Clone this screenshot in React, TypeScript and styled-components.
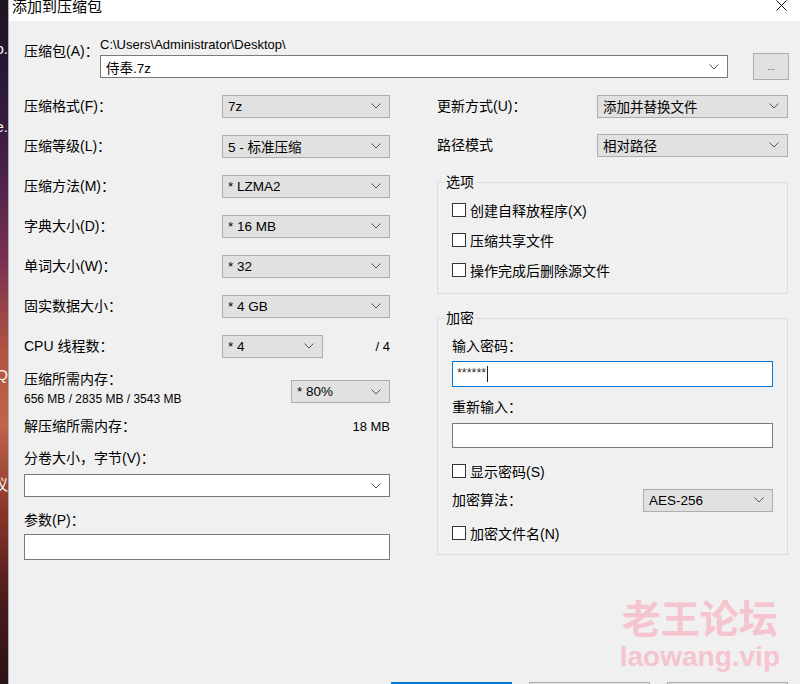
import styled, { createGlobalStyle } from "styled-components";

const GlobalStyle = createGlobalStyle`
  html, body {
    margin: 0;
    padding: 0;
    height: 100%;
    overflow: hidden;
    background: #f0f0f0;
  }
  body {
    font-family: "Liberation Sans", "Noto Sans CJK SC", sans-serif;
    color: #000;
  }
  * {
    box-sizing: border-box;
  }
`;

const Chevron = () => (
  <svg width="10" height="6" viewBox="0 0 10 6">
    <path d="M0.5 0.5 L5 5 L9.5 0.5" fill="none" stroke="#555" strokeWidth="1" />
  </svg>
);

const CloseIcon = () => (
  <svg width="11" height="11" viewBox="0 0 11 11">
    <path d="M0.5 0.5 L10.5 10.5 M10.5 0.5 L0.5 10.5" stroke="#111" strokeWidth="1" />
  </svg>
);

function Select({ value, width, white }: { value: string; width?: number; white?: boolean }) {
  return (
    <SelectBox $width={width} $white={white}>
      <span>{value}</span>
      <Chevron />
    </SelectBox>
  );
}

function Check({ label }: { label: string }) {
  return (
    <CheckRow>
      <Box />
      <span>{label}</span>
    </CheckRow>
  );
}

function App() {
  return (
    <Screen>
      <GlobalStyle />
      <Desktop>
        <DesktopText $top={40}>o.</DesktopText>
        <DesktopText $top={118}>e.</DesktopText>
        <DesktopText $top={366}>Q</DesktopText>
        <DesktopText $top={476}>议</DesktopText>
      </Desktop>
      <Dialog>
        <TitleBar>
          <Title>添加到压缩包</Title>
          <CloseIcon />
        </TitleBar>
        <Body>
          <ArchiveRow>
            <ArchiveLabel>压缩包(A)：</ArchiveLabel>
            <ArchiveMain>
              <PathText>C:\Users\Administrator\Desktop\</PathText>
              <ComboRow>
                <Select value="侍奉.7z" white />
                <BrowseButton>...</BrowseButton>
              </ComboRow>
            </ArchiveMain>
          </ArchiveRow>

          <Columns>
            <Column>
              <FieldRow $cols="198px 168px">
                <Label>压缩格式(F)：</Label>
                <Select value="7z" />
              </FieldRow>
              <FieldRow $cols="198px 168px">
                <Label>压缩等级(L)：</Label>
                <Select value="5 - 标准压缩" />
              </FieldRow>
              <FieldRow $cols="198px 168px">
                <Label>压缩方法(M)：</Label>
                <Select value="* LZMA2" />
              </FieldRow>
              <FieldRow $cols="198px 168px">
                <Label>字典大小(D)：</Label>
                <Select value="* 16 MB" />
              </FieldRow>
              <FieldRow $cols="198px 168px">
                <Label>单词大小(W)：</Label>
                <Select value="* 32" />
              </FieldRow>
              <FieldRow $cols="198px 168px">
                <Label>固实数据大小：</Label>
                <Select value="* 4 GB" />
              </FieldRow>
              <FieldRow $cols="198px 101px 1fr">
                <Label>CPU 线程数：</Label>
                <Select value="* 4" />
                <Value>/ 4</Value>
              </FieldRow>
              <MemBlock>
                <div>
                  <Label>压缩所需内存：</Label>
                  <MemSub>656 MB / 2835 MB / 3543 MB</MemSub>
                </div>
                <MemSelect>
                  <Select value="* 80%" width={99} />
                </MemSelect>
              </MemBlock>
              <SplitRow>
                <Label>解压缩所需内存：</Label>
                <Value>18 MB</Value>
              </SplitRow>
              <BlockLabel $top={14}>分卷大小，字节(V)：</BlockLabel>
              <VolumeCombo>
                <Select value="" white />
              </VolumeCombo>
              <BlockLabel $top={14}>参数(P)：</BlockLabel>
              <TextInput $top={5} $height={26} />
            </Column>

            <Column>
              <FieldRow $cols="160px 191px">
                <Label>更新方式(U)：</Label>
                <Select value="添加并替换文件" />
              </FieldRow>
              <FieldRow $cols="160px 191px" $height={38}>
                <Label>路径模式</Label>
                <Select value="相对路径" />
              </FieldRow>
              <Group $top={9}>
                <Legend>选项</Legend>
                <GroupInner $pad={4} $bottom={8}>
                  <Check label="创建自释放程序(X)" />
                  <Check label="压缩共享文件" />
                  <Check label="操作完成后删除源文件" />
                </GroupInner>
              </Group>
              <Group $top={15}>
                <Legend>加密</Legend>
                <GroupInner $pad={0} $bottom={6}>
                  <BlockLabel $top={10}>输入密码：</BlockLabel>
                  <TextInput $top={6} $height={26} $focused>
                    <Stars>******</Stars>
                    <Caret />
                  </TextInput>
                  <BlockLabel $top={11}>重新输入：</BlockLabel>
                  <TextInput $top={7} $height={25} />
                  <CheckSpacer>
                    <Check label="显示密码(S)" />
                  </CheckSpacer>
                  <AlgoRow>
                    <Label>加密算法：</Label>
                    <Select value="AES-256" width={130} />
                  </AlgoRow>
                  <Check label="加密文件名(N)" />
                </GroupInner>
              </Group>
            </Column>
          </Columns>

          <Footer>
            <DialogButton $primary>确定</DialogButton>
            <DialogButton>取消</DialogButton>
            <DialogButton>帮助</DialogButton>
          </Footer>
        </Body>

        <Watermark>
          <WatermarkCn>老王论坛</WatermarkCn>
          <WatermarkEn>laowang.vip</WatermarkEn>
        </Watermark>
      </Dialog>
    </Screen>
  );
}

const Screen = styled.div`
  display: flex;
  width: 800px;
  height: 684px;
  overflow: hidden;
`;

const Desktop = styled.div`
  position: relative;
  flex: none;
  width: 8px;
  overflow: hidden;
  background: linear-gradient(
    180deg,
    #1c1420 0%,
    #2a1838 12%,
    #4a2048 25%,
    #7a3050 38%,
    #b4553f 52%,
    #c0644a 62%,
    #8a3428 75%,
    #4a1a1a 88%,
    #2c1214 100%
  );
`;

const DesktopText = styled.span<{ $top: number }>`
  position: absolute;
  right: 0;
  top: ${(p) => p.$top}px;
  color: #f4f4f4;
  font-size: 15px;
  line-height: 18px;
  white-space: nowrap;
`;

const Dialog = styled.div`
  position: relative;
  flex: 1;
  display: flex;
  flex-direction: column;
  background: #f0f0f0;
  border-left: 1px solid #9fb4c8;
`;

const TitleBar = styled.div`
  height: 21px;
  flex: none;
  display: flex;
  justify-content: space-between;
  align-items: flex-start;
  padding: 0 13px 0 3px;
  background: #fff;
`;

const Title = styled.div`
  font-size: 15px;
  line-height: 14px;
  color: #000;
`;

const Body = styled.div`
  padding: 16px 11px 0 15px;
`;

const ArchiveRow = styled.div`
  display: flex;
`;

const ArchiveLabel = styled.div`
  width: 76px;
  flex: none;
  padding-top: 5px;
  font-size: 14px;
  line-height: 18px;
`;

const ArchiveMain = styled.div`
  flex: 1;
`;

const PathText = styled.div`
  font-size: 13px;
  line-height: 16px;
`;

const ComboRow = styled.div`
  display: flex;
  align-items: center;
  gap: 25px;
  height: 27px;

  & > div:first-child {
    flex: 1;
  }
`;

const BrowseButton = styled.div`
  width: 36px;
  height: 27px;
  flex: none;
  display: flex;
  align-items: center;
  justify-content: center;
  background: #e1e1e1;
  border: 1px solid #adadad;
  font-size: 9px;
  color: #444;
`;

const SelectBox = styled.div<{ $width?: number; $white?: boolean }>`
  width: ${(p) => (p.$width ? `${p.$width}px` : "100%")};
  height: 23px;
  display: flex;
  align-items: center;
  justify-content: space-between;
  padding: 0 8px 0 5px;
  background: ${(p) => (p.$white ? "#fff" : "#e1e1e1")};
  border: 1px solid ${(p) => (p.$white ? "#7a7a7a" : "#adadad")};
  font-size: 13.5px;
  white-space: nowrap;
`;

const Columns = styled.div`
  display: grid;
  grid-template-columns: 366px 351px;
  column-gap: 47px;
  margin-top: 6px;
  align-items: start;
`;

const Column = styled.div`
  display: flex;
  flex-direction: column;
`;

const FieldRow = styled.div<{ $cols: string; $height?: number }>`
  display: grid;
  grid-template-columns: ${(p) => p.$cols};
  align-items: center;
  height: ${(p) => p.$height ?? 40}px;
`;

const Label = styled.div`
  font-size: 14px;
  line-height: 18px;
  white-space: nowrap;
`;

const Value = styled.div`
  font-size: 13px;
  text-align: right;
`;

const MemBlock = styled.div`
  display: flex;
  justify-content: space-between;
  padding-top: 4px;
`;

const MemSub = styled.div`
  margin-top: 2px;
  font-size: 12px;
  line-height: 18px;
`;

const MemSelect = styled.div`
  margin-top: 10px;
`;

const SplitRow = styled.div`
  display: flex;
  justify-content: space-between;
  align-items: center;
  margin-top: 9px;
`;

const BlockLabel = styled(Label)<{ $top: number }>`
  margin-top: ${(p) => p.$top}px;
`;

const VolumeCombo = styled.div`
  margin-top: 7px;
`;

const TextInput = styled.div<{ $top: number; $height: number; $focused?: boolean }>`
  margin-top: ${(p) => p.$top}px;
  height: ${(p) => p.$height}px;
  display: flex;
  align-items: center;
  padding-left: 4px;
  background: #fff;
  border: 1px solid ${(p) => (p.$focused ? "#0078d7" : "#7a7a7a")};
`;

const Stars = styled.span`
  font-size: 12.5px;
  color: #333;
  letter-spacing: 0;
  line-height: 10px;
  margin-top: -3px;
`;

const Caret = styled.span`
  width: 1px;
  height: 16px;
  margin-left: 1px;
  background: #222;
`;

const Group = styled.fieldset<{ $top: number }>`
  margin: ${(p) => p.$top}px 0 0;
  padding: 0 14px;
  min-width: 0;
  border: 1px solid #dcdcdc;
`;

const Legend = styled.legend`
  margin-left: -8px;
  padding: 0 2px;
  font-size: 14px;
  line-height: 18px;
`;

const GroupInner = styled.div<{ $pad: number; $bottom: number }>`
  display: flex;
  flex-direction: column;
  padding-top: ${(p) => p.$pad}px;
  padding-bottom: ${(p) => p.$bottom}px;
`;

const CheckRow = styled.div`
  display: flex;
  align-items: center;
  gap: 4px;
  height: 30px;
  font-size: 14px;
`;

const Box = styled.span`
  width: 14px;
  height: 14px;
  flex: none;
  background: #fff;
  border: 1px solid #333;
`;

const CheckSpacer = styled.div`
  margin-top: 8px;
`;

const AlgoRow = styled.div`
  display: flex;
  align-items: center;
  justify-content: space-between;
  height: 28px;
  margin-bottom: 4px;
`;

const Footer = styled.div`
  display: flex;
  justify-content: flex-end;
  gap: 17px;
  margin-top: 122px;
  padding-right: 1px;
`;

const DialogButton = styled.div<{ $primary?: boolean }>`
  width: 121px;
  height: 23px;
  display: flex;
  align-items: center;
  justify-content: center;
  background: #e1e1e1;
  border: ${(p) => (p.$primary ? "2px solid #0078d7" : "1px solid #adadad")};
  font-size: 14px;
`;

const Watermark = styled.div`
  position: absolute;
  top: 594px;
  right: 20px;
  display: flex;
  flex-direction: column;
  align-items: center;
  pointer-events: none;
`;

const WatermarkCn = styled.div`
  font-family: "Noto Sans CJK SC", sans-serif;
  font-size: 39px;
  font-weight: 700;
  line-height: 44px;
  color: #f6c4ce;
`;

const WatermarkEn = styled.div`
  margin-top: 4px;
  font-family: "Liberation Sans", sans-serif;
  font-size: 28px;
  font-weight: 700;
  line-height: 30px;
  color: #f6c4ce;
`;

export default App;
